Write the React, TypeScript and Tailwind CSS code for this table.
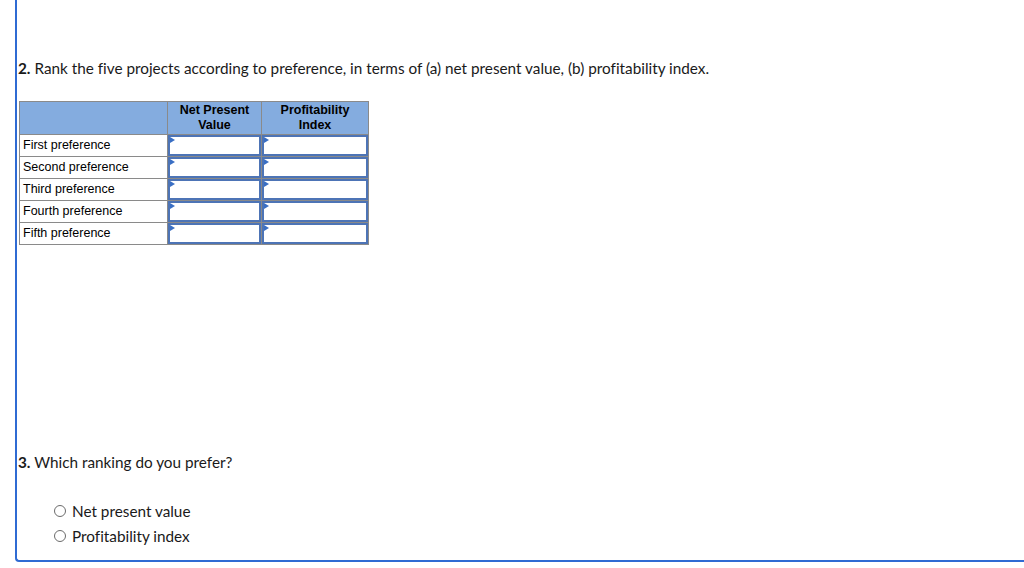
import React from "react";

const rows = [
  "First preference",
  "Second preference",
  "Third preference",
  "Fourth preference",
  "Fifth preference",
];

function InputCell() {
  return (
    <td className="border border-[#8a8a8a] p-0 align-top">
      <div className="relative h-[21px] border-2 border-[#4d74b6] bg-white">
        <span className="absolute left-0 top-0 h-0 w-0 border-y-[3px] border-l-[5px] border-y-transparent border-l-[#3a6fc4]" />
      </div>
    </td>
  );
}

export default function App() {
  return (
    <div className="h-[568px] w-[1024px] overflow-hidden bg-white font-['Lato',sans-serif] text-[#1a1a1a] [font-variant-ligatures:none]">
      <div className="ml-[15px] flex h-[562px] flex-col rounded-bl-[4px] border-b-2 border-l-2 border-[#2f6bd3] pl-[1px]">
        <p className="mt-[58px] text-[15.3px] leading-[20px]">
          <b>2.</b> Rank the five projects according to preference, in terms of (a) net present value, (b) profitability index.
        </p>

        <table className="ml-[1px] mt-[23px] w-[350px] border-collapse font-['Liberation_Sans',Arial,sans-serif] text-[12.5px] text-black">
          <thead>
            <tr className="h-[33px] bg-[#84acdf]">
              <th className="w-[148px] border border-[#8a8a8a]" />
              <th className="w-[94px] border border-[#8a8a8a] font-bold leading-[15px]">
                Net Present
                <br />
                Value
              </th>
              <th className="border border-[#8a8a8a] font-bold leading-[15px]">
                Profitability
                <br />
                Index
              </th>
            </tr>
          </thead>
          <tbody>
            {rows.map((r) => (
              <tr key={r} className="h-[22px]">
                <td className="border border-[#8a8a8a] px-[3px] pb-[1px] leading-[19px]">{r}</td>
                <InputCell />
                <InputCell />
              </tr>
            ))}
          </tbody>
        </table>

        <p className="mt-[207px] text-[15.3px] leading-[20px]">
          <b>3.</b> Which ranking do you prefer?
        </p>

        <div className="ml-[36px] mt-[29px] flex flex-col gap-[5px] text-[15.3px] leading-[20px]">
          {["Net present value", "Profitability index"].map((o) => (
            <label key={o} className="flex items-center gap-[6px]">
              <span className="h-[12px] w-[12px] rounded-full border border-[#6b6b6b] bg-white" />
              {o}
            </label>
          ))}
        </div>
      </div>
    </div>
  );
}
